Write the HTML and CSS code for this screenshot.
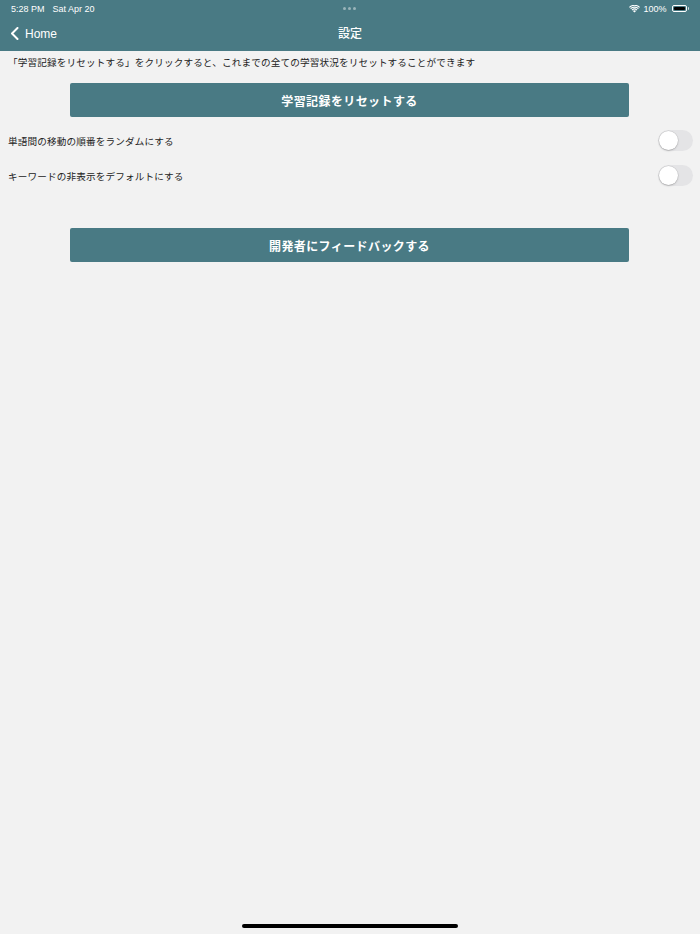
FILE: index.html
```html
<!DOCTYPE html>
<html lang="ja">
<head>
<meta charset="utf-8">
<title>設定</title>
<link rel="stylesheet" href="styles.css">
</head>
<body>
<div class="screen">
  <header class="header">
    <div class="status">
      <div class="status-left"><span>5:28 PM</span><span>Sat Apr 20</span></div>
      <div class="status-dots"><i></i><i></i><i></i></div>
      <div class="status-right">
        <svg class="wifi" width="11" height="8" viewBox="0 0 11 8"><path d="M5.5 7.6 3.9 6a2.3 2.3 0 0 1 3.2 0Z" fill="#fff"/><path d="M2.6 4.7a4.1 4.1 0 0 1 5.8 0l-.8.8a3 3 0 0 0-4.2 0Z" fill="#fff"/><path d="M1.2 3.3a6.1 6.1 0 0 1 8.6 0l-.8.8a5 5 0 0 0-7 0Z" fill="#fff"/><path d="M0 2a7.8 7.8 0 0 1 11 0l-.8.8a6.7 6.7 0 0 0-9.4 0Z" fill="#fff"/></svg>
        <span>100%</span>
        <span class="battery"><span class="battery-fill"></span></span><span class="battery-nub"></span>
      </div>
    </div>
    <nav class="nav">
      <a class="back">
        <svg width="9" height="13" viewBox="0 0 9 13"><path d="M7.5 1 2 6.5 7.5 12" fill="none" stroke="#fff" stroke-width="2" stroke-linecap="round" stroke-linejoin="round"/></svg>
        <span>Home</span>
      </a>
      <div class="title">設定</div>
    </nav>
  </header>
  <main class="content">
    <p class="note">「学習記録をリセットする」をクリックすると、これまでの全ての学習状況をリセットすることができます</p>
    <div class="btn">学習記録をリセットする</div>
    <div class="row"><span>単語間の移動の順番をランダムにする</span><span class="toggle"><span class="knob"></span></span></div>
    <div class="row"><span>キーワードの非表示をデフォルトにする</span><span class="toggle"><span class="knob"></span></span></div>
    <div class="btn btn-feedback">開発者にフィードバックする</div>
  </main>
  <div class="home-indicator"></div>
</div>
</body>
</html>
```
FILE: styles.css
```css
* { box-sizing: border-box; }
html, body { margin: 0; padding: 0; }
body {
  background: #f2f2f2;
  font-family: "Noto Sans CJK JP", "Noto Sans", "Liberation Sans", sans-serif;
  color: #222;
}
.screen {
  width: 700px;
  height: 934px;
  display: flex;
  flex-direction: column;
  position: relative;
  overflow: hidden;
}
.header {
  background: #497a84;
  height: 51px;
  color: #fff;
  display: flex;
  flex-direction: column;
}
.status {
  height: 17px;
  display: flex;
  align-items: center;
  justify-content: space-between;
  padding: 0 11px 0 11px;
  font-family: "Liberation Sans", sans-serif;
  font-size: 9px;
  position: relative;
}
.status-left { display: flex; gap: 8px; }
.status-dots {
  position: absolute;
  left: 343px;
  top: 7px;
  display: flex;
  gap: 2px;
}
.status-dots i { width: 3px; height: 3px; border-radius: 50%; background: #9ab4ba; display: block; }
.status-right { display: flex; align-items: center; gap: 3px; }
.battery {
  width: 15px; height: 7px; border-radius: 2px; border: 1px solid #fff;
  padding: 1px; display: flex; margin-left: 2px;
}
.battery-fill { flex: 1; background: #000; border-radius: 1px; }
.battery-nub { width: 1.5px; height: 3px; background: #cfdadd; margin-left: -2px; border-radius: 0 1px 1px 0; }
.nav {
  flex: 1;
  display: flex;
  align-items: center;
  position: relative;
  padding-left: 10px;
  padding-bottom: 1px;
}
.back { display: flex; align-items: center; gap: 6px; font-family: "Liberation Sans", sans-serif; font-size: 12px; }
.title {
  position: absolute;
  left: 0; right: 0; top: 7px;
  text-align: center;
  font-size: 12px;
  font-weight: 500;
}
.content { display: flex; flex-direction: column; }
.note {
  margin: 0;
  padding: 3px 0 0 8px;
  font-size: 9.6px;
  line-height: 16px;
  letter-spacing: 0.15px;
}
.btn {
  margin: 13px 71px 0 70px;
  height: 34px;
  background: #497a84;
  color: #fff;
  border-radius: 2px;
  display: flex;
  align-items: center;
  justify-content: center;
  font-size: 12px;
  font-weight: 700;
  letter-spacing: 0.4px;
}
.row {
  height: 35px;
  display: flex;
  align-items: center;
  justify-content: space-between;
  padding: 0 7px 0 8px;
  font-size: 9.6px;
  letter-spacing: 0.15px;
}
.btn + .row { margin-top: 6px; }
.toggle {
  width: 35px; height: 21px; border-radius: 11px; background: #e4e4e6;
  display: flex; align-items: center; padding: 1px;
}
.knob {
  width: 19px; height: 19px; border-radius: 50%; background: #fff;
  box-shadow: 0 0 0 0.5px rgba(0,0,0,0.12), 0 1px 2px rgba(0,0,0,0.18);
}
.btn-feedback { margin-top: 35px; }
.home-indicator {
  position: absolute;
  left: 242px; top: 924px;
  width: 216px; height: 4px; border-radius: 2px; background: #000;
}
```
